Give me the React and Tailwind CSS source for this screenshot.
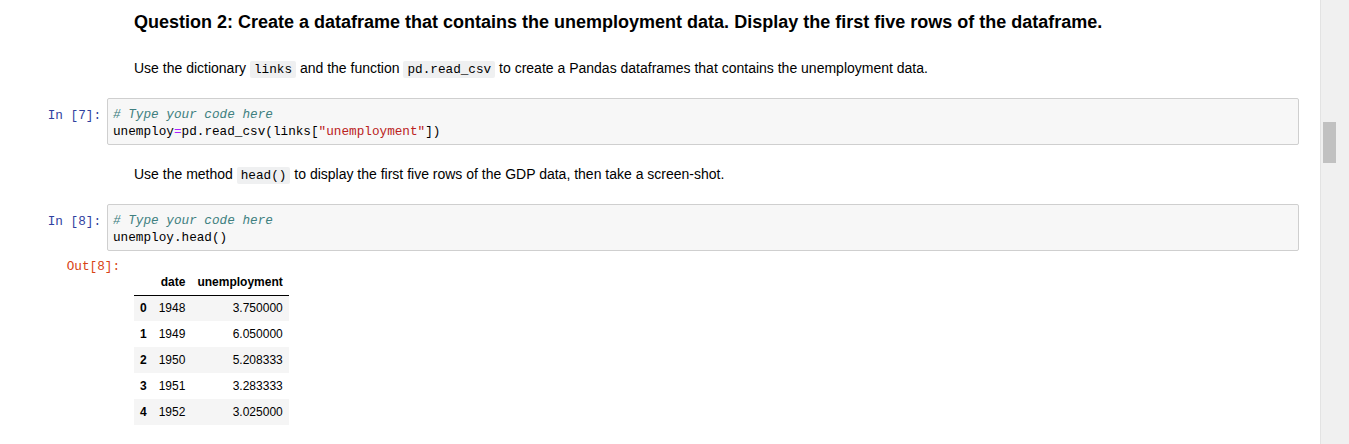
import React from "react";

const mono = { fontFamily: '"Liberation Mono", "DejaVu Sans Mono", monospace' };

const Code = ({ children }) => (
  <code
    className="bg-[#eff0f1] px-[4px] py-[1px] rounded-[2px] text-[12.7px] text-black"
    style={mono}
  >
    {children}
  </code>
);

const CodeCell = ({ n, children }) => (
  <div className="flex">
    <div
      className="w-[107px] shrink-0 pr-[6px] pt-[9px] text-right text-[12.7px] leading-[17px] text-[#303F9F]"
      style={mono}
    >
      In [{n}]:
    </div>
    <div
      className="w-[1192px] h-[47px] border border-[#cfcfcf] rounded-[2px] bg-[#f7f7f7] pl-[5px] pt-[7px] text-[12.7px] leading-[17px] text-black"
      style={mono}
    >
      {children}
    </div>
  </div>
);

const rows = [
  ["0", "1948", "3.750000"],
  ["1", "1949", "6.050000"],
  ["2", "1950", "5.208333"],
  ["3", "1951", "3.283333"],
  ["4", "1952", "3.025000"],
];

export default function App() {
  return (
    <div
      className="flex h-[444px] w-[1349px] bg-white overflow-hidden text-black"
      style={{ fontFamily: '"Liberation Sans", Arial, sans-serif' }}
    >
      <div className="w-[1320px] shrink-0">
        {/* Markdown: question */}
        <div className="pl-[134px] mt-[12px] h-[20px] leading-[20px] text-[18px] font-bold">
          Question 2: Create a dataframe that contains the unemployment data. Display the first five rows of the dataframe.
        </div>
        <div className="pl-[134px] mt-[27px] h-[18px] leading-[18px] text-[14px]">
          Use the dictionary <Code>links</Code> and the function <Code>pd.read_csv</Code> to create a Pandas dataframes that contains the unemployment data.
        </div>

        <div className="mt-[21px]">
          <CodeCell n="7">
            <div className="italic text-[#408080]"># Type your code here</div>
            <div>
              unemploy<span className="text-[#AA22FF]">=</span>pd.read_csv(links[
              <span className="text-[#BA2121]">"unemployment"</span>])
            </div>
          </CodeCell>
        </div>

        <div className="pl-[134px] mt-[20px] h-[18px] leading-[18px] text-[14px]">
          Use the method <Code>head()</Code> to display the first five rows of the GDP data, then take a screen-shot.
        </div>

        <div className="mt-[21px]">
          <CodeCell n="8">
            <div className="italic text-[#408080]"># Type your code here</div>
            <div>unemploy.head()</div>
          </CodeCell>
        </div>

        {/* Output */}
        <div className="flex mt-[7px]">
          <div
            className="w-[124px] shrink-0 pr-[4px] text-right text-[12.7px] leading-[17px] text-[#D84315]"
            style={mono}
          >
            Out[8]:
          </div>
          <div className="pl-[10px] pt-[12px]">
            <table className="text-[12px] border-collapse">
              <thead>
                <tr className="h-[25px] border-b border-black">
                  <th className="px-[6px]"></th>
                  <th className="px-[6px] text-right font-bold">date</th>
                  <th className="px-[6px] text-right font-bold">unemployment</th>
                </tr>
              </thead>
              <tbody>
                {rows.map((r, i) => (
                  <tr key={r[0]} className={i % 2 === 0 ? "h-[26px] bg-[#f5f5f5]" : "h-[26px] bg-white"}>
                    <th className="px-[6px] text-right font-bold">{r[0]}</th>
                    <td className="px-[6px] text-right">{r[1]}</td>
                    <td className="px-[6px] text-right">{r[2]}</td>
                  </tr>
                ))}
              </tbody>
            </table>
          </div>
        </div>
      </div>

      {/* Scrollbar */}
      <div className="w-[29px] shrink-0 border-l border-[#e3e3e3] bg-[#f0f0f0] pl-[2px]">
        <div className="mt-[122px] w-[13px] h-[41px] bg-[#c1c1c1]"></div>
      </div>
    </div>
  );
}
